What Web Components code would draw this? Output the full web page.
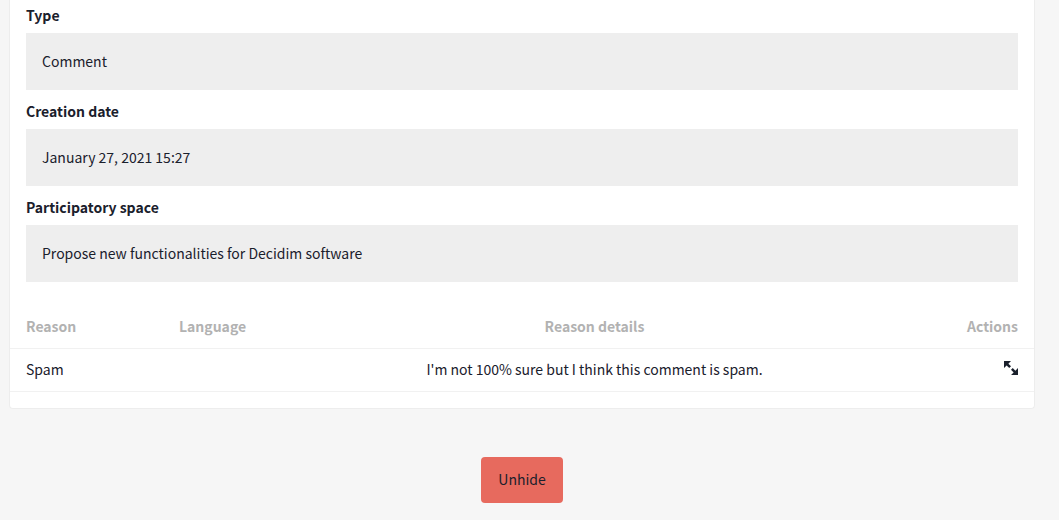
<!DOCTYPE html>
<html lang="en">
<head>
<meta charset="utf-8">
<title>Reported content</title>
<style>
body {
  margin: 0;
  background: #f6f6f6;
  color: #1a202c;
  font: 14px/24px "Source Sans Pro", "Noto Sans CJK SC", "Noto Sans", sans-serif;
}
</style>
</head>
<body>
<report-page>
  <report-card>
    <report-field label="Type">Comment</report-field>
    <report-field label="Creation date">January 27, 2021 15:27</report-field>
    <report-field label="Participatory space">Propose new functionalities for Decidim software</report-field>
    <report-table slot="table"></report-table>
  </report-card>
  <action-button slot="actions">Unhide</action-button>
</report-page>
<script>
function define(name, html) {
  const template = document.createElement('template');
  template.innerHTML = html;
  customElements.define(name, class extends HTMLElement {
    constructor() {
      super();
      this.attachShadow({ mode: 'open' }).append(template.content.cloneNode(true));
      const label = this.shadowRoot.querySelector('[data-label]');
      if (label) label.textContent = this.getAttribute('label');
    }
  });
}

define('report-page', `
  <style>
    :host { display: block; padding: 0 24px 16px 9px; }
    footer { display: flex; justify-content: center; padding-top: 48px; }
  </style>
  <main><slot></slot></main>
  <footer><slot name="actions"></slot></footer>`);

define('report-card', `
  <style>
    :host {
      display: block;
      padding-bottom: 16px;
      background: #fff;
      border: 1px solid #ededed;
      border-top: 0;
      border-radius: 0 0 4px 4px;
    }
    .fields { display: flex; flex-direction: column; gap: 9px; padding: 3px 16px 24px; }
  </style>
  <div class="fields"><slot></slot></div>
  <slot name="table"></slot>`);

define('report-field', `
  <style>
    :host { display: block; }
    dl, dd { margin: 0; }
    dt { font-weight: 600; padding-bottom: 6px; }
    dd { background: #eee; padding: 16px 16px 17px; }
  </style>
  <dl><dt data-label></dt><dd><slot></slot></dd></dl>`);

define('report-table', `
  <style>
    :host { display: block; }
    table { width: 100%; table-layout: fixed; border-collapse: separate; border-spacing: 0; }
    th, td { padding: 8px 8px 10px; border-bottom: 1px solid #f1f1f1; text-align: center; }
    th { color: #b2b2b2; font-weight: 600; }
    th:first-child, td:first-child { padding-left: 16px; text-align: left; }
    th:last-child, td:last-child { padding-right: 16px; text-align: right; }
    .reason { width: 161px; }
    .language { width: 83px; }
    .actions { width: 99px; }
    a { color: inherit; }
    svg { width: 14px; height: 14px; fill: currentColor; }
  </style>
  <table>
    <colgroup><col class="reason"><col class="language"><col><col class="actions"></colgroup>
    <thead><tr><th scope="col">Reason</th><th scope="col">Language</th><th scope="col">Reason details</th><th scope="col">Actions</th></tr></thead>
    <tbody><tr>
      <td>Spam</td><td></td><td>I'm not 100% sure but I think this comment is spam.</td>
      <td><a href="#expand" aria-label="Expand"><svg viewBox="0 0 8 8" aria-hidden="true"><path d="M0 0v4l1.5-1.5 1.5 1.5 1-1-1.5-1.5 1.5-1.5h-4zm5 4l-1 1 1.5 1.5-1.5 1.5h4v-4l-1.5 1.5-1.5-1.5z"/></svg></a></td>
    </tr></tbody>
  </table>`);

define('action-button', `
  <style>
    :host { display: block; }
    button {
      font: inherit;
      color: #1a202c;
      background: #e76a5e;
      border: 0;
      border-radius: 4px;
      padding: 10px 17px 12px;
      cursor: pointer;
    }
  </style>
  <button type="button"><slot></slot></button>`);
</script>
</body>
</html>
